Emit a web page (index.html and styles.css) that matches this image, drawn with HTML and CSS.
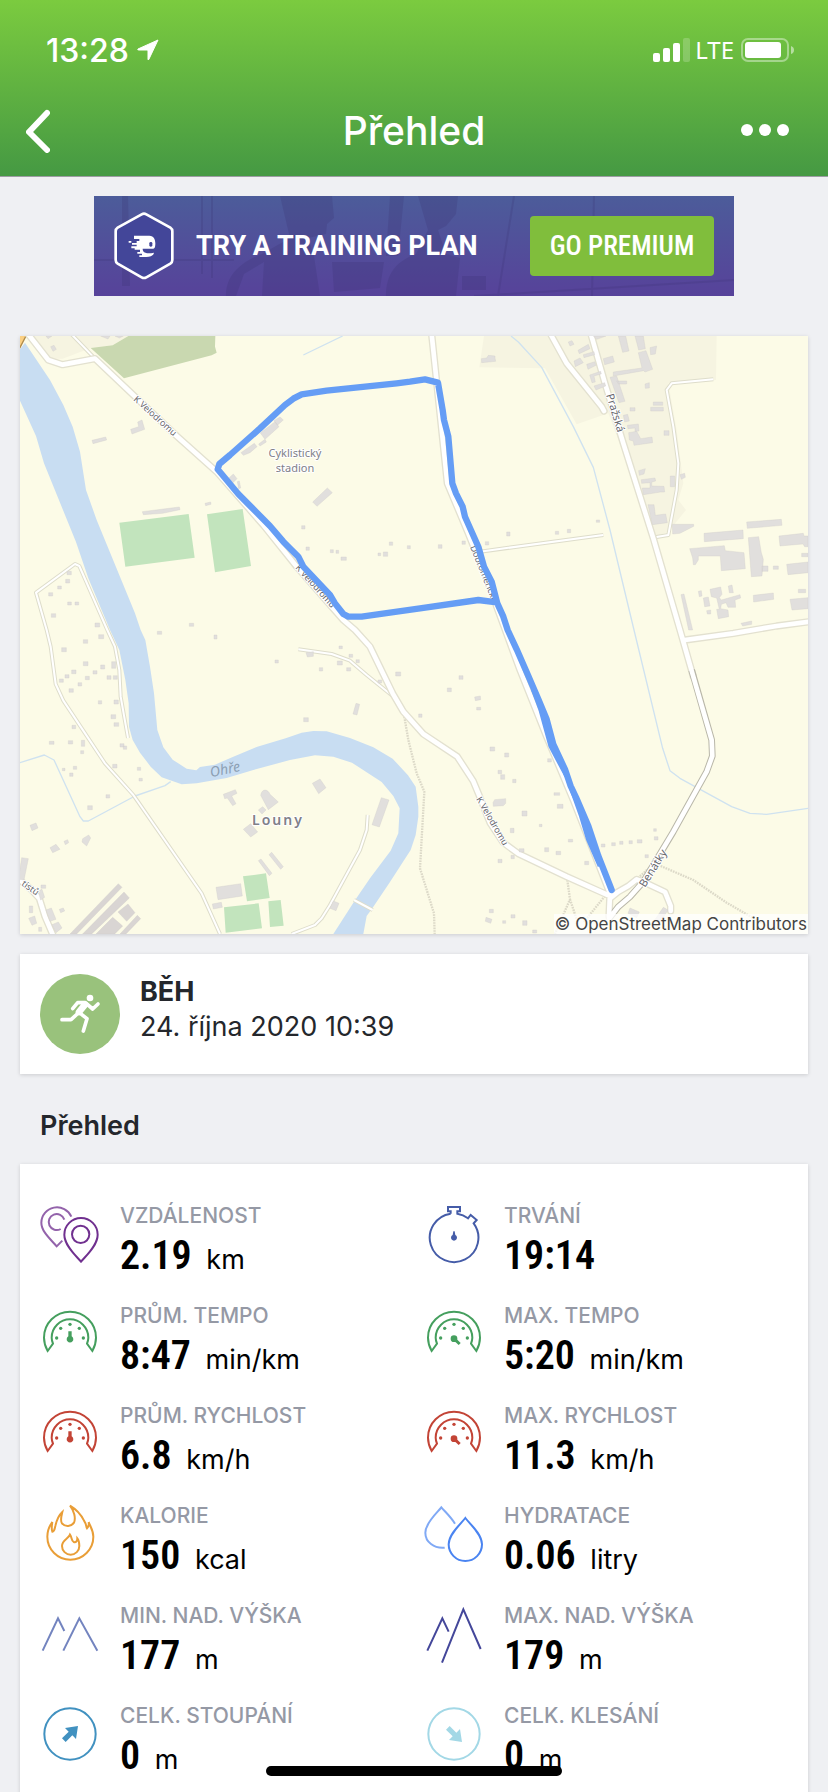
FILE: index.html
```html
<!DOCTYPE html>
<html lang="cs">
<head>
    <meta charset="UTF-8">
    <meta name="viewport" content="width=device-width, initial-scale=1.0">
    <title>Přehled</title>
    <link rel="stylesheet" href="styles.css">
</head>
<body>
    <!-- shared icons -->
    <svg class="sprite" aria-hidden="true">
        <symbol id="gauge" viewBox="0 0 180 180">
            <path d="M23 141C16 128 12 116 12 101A78 78 0 0 1 168 101C168 116 164 128 157 141L141 119C144 111 145 106 145 101A55 55 0 0 0 35 101C35 106 36 111 39 119Z"/>
            <g class="solid"><circle cx="50" cy="102" r="5"/><circle cx="130" cy="102" r="5"/><circle cx="62" cy="73" r="5"/><circle cx="118" cy="73" r="5"/><circle cx="90" cy="61" r="5"/></g>
        </symbol>
        <symbol id="arrow" viewBox="0 0 180 180">
            <circle cx="90" cy="90" r="77"/>
            <path class="solid" d="M114 66L75 72L86 83L66 103L77 114L97 94L108 105Z"/>
        </symbol>
    </svg>

    <div class="screen">
        <header class="header">
            <div class="status">
                <span class="time">13:28</span>
                <svg class="location" viewBox="0 0 22 22"><path d="M21 1L1 10Q0 11 2 11H10Q11 11 11 12V20Q11 22 12 20Z" fill="#fff" stroke="#fff" stroke-linejoin="round"/></svg>
                <svg class="signal" viewBox="0 0 37 24" fill="#fff"><rect y="15" width="7" height="9" rx="2"/><rect x="10" y="10" width="7" height="14" rx="2"/><rect x="20" y="5" width="7" height="19" rx="2"/><rect x="30" width="7" height="24" rx="2" opacity=".2"/></svg>
                <span class="network">LTE</span>
                <svg class="battery" viewBox="0 0 53 24"><rect x="1" y="1" width="46" height="22" rx="6" fill="none" stroke="#fff" stroke-width="2" opacity=".4"/><rect x="4" y="4" width="36" height="16" rx="3" fill="#fff"/><path d="M50 8Q53 9 53 12Q53 15 50 16Z" fill="#fff" opacity=".5"/></svg>
            </div>
            <nav class="navbar">
                <button class="nav-btn" aria-label="Zpět"><svg width="24" height="46" viewBox="0 0 24 46"><path d="M21 6L3 25L21 43" fill="none" stroke="#fff" stroke-width="6" stroke-linecap="round" stroke-linejoin="round"/></svg></button>
                <h1>Přehled</h1>
                <button class="nav-btn more" aria-label="Více"><svg width="48" height="12" viewBox="0 0 48 12" fill="#fff"><circle cx="6" cy="6" r="6"/><circle cx="24" cy="6" r="6"/><circle cx="42" cy="6" r="6"/></svg></button>
            </nav>
        </header>

        <main class="content">
            <section class="banner">
                <svg class="banner-bg" viewBox="0 0 640 100" preserveAspectRatio="xMidYMid slice" aria-hidden="true">
                    <g fill="#39306f" opacity=".22">
                        <path d="M186 0H238L240 22L233 28L232 38L214 42L220 60L226 100H168L170 66L150 78L142 100H132C132 82 142 68 168 58L196 42Z"/>
                        <path d="M324 0H364L362 18L352 30L344 34L352 58L366 62L362 100H292C292 80 300 66 322 58L334 34Z"/>
                        <path d="M238 66H290L286 92L240 96ZM368 80H392V94H368ZM28 0H34L36 90H28ZM296 0H310L304 60H292Z"/>
                    </g>
                    <path d="M0 64H140M108 0V78M118 0V82M420 0L404 100M500 0L498 100M380 100L640 84" stroke="#39306f" stroke-width="2" opacity=".2"/>
                </svg>
                <svg class="hexagon" viewBox="0 0 180 204" aria-hidden="true">
                    <path d="M83 7Q90 3 97 7L169 47Q175 51 175 58V144Q175 151 169 155L97 196Q90 200 83 196L11 155Q5 151 5 144V58Q5 51 11 47Z" fill="#434699" stroke="#fff" stroke-width="8"/>
                    <path d="M60 71H106C120 71 124 84 124 94C124 106 122 110 118 110H86C86 122 96 126 120 122C118 132 108 136 92 135H76V130H84V125H70V120H78V113H62V109H52V103H68V98H54V93H68V87H76V81H60ZM44 87H52V92H44Z" fill="#fff"/>
                    <rect x="106" y="90" width="9" height="14" rx="4" fill="#434699"/>
                </svg>
                <strong>TRY A TRAINING PLAN</strong>
                <button class="premium">GO PREMIUM</button>
            </section>

            <figure class="map card">
                <svg viewBox="0 0 788 598" role="img" aria-label="Mapa trasy">
                    <rect width="788" height="598" fill="#fcfbe7"/>
                    <g transform="scale(.33333)" fill="none" stroke-linejoin="round">
                        <!-- land -->
                        <path fill="#f6f4e1" d="M30 0H325L278 28L212 36L128 68H85ZM1392 0L1378 94L1575 97L1670 265L1765 232L1905 602L1945 587L1998 522L1975 492L1990 442L1970 282L1945 142L2088 132L2090 0Z"/>
                        <path fill="#c9d8b0" d="M212 36L278 28L325 0H586L585 32L590 50L575 58L312 127Z"/>
                        <path fill="#fbd083" stroke="#b08a4a" stroke-width="4" d="M-4 -4H20L-4 42Z"/>
                        <!-- river -->
                        <path fill="#c8ddf2" d="M0 40L15 20L90 132L130 207L158 272L180 347L198 462L230 552L300 722L345 832L362 882L376 912L390 992L402 1072L412 1182L430 1234L458 1271L500 1298L529 1303L540 1293L585 1286L640 1262L712 1232L797 1207L845 1190L880 1185L920 1186L990 1206L1060 1234L1118 1268L1164 1318L1187 1352L1195 1412V1442L1187 1497L1172 1542L1110 1638L1056 1718L1040 1740L1030 1794H940L1004 1694L1050 1627L1112 1544L1135 1492L1139 1417L1120 1380L1085 1338L996 1280L940 1262L885 1258L810 1272L700 1302L620 1326L530 1342L485 1345L425 1324L392 1292L360 1250L338 1212L327 1172L326 1102L316 1032L298 942L270 882L205 727L168 618L72 382L48 300L0 194Z"/>
                        <path stroke="#cfe2f0" stroke-width="4" d="M0 1280L73 1257L102 1272L180 1442L190 1455H205L345 1380L435 1349L452 1337M1473 0L1495 18L1565 94L1660 272L1720 394L1770 582L1842 882L1928 1237L1950 1304L1980 1327L2135 1412L2190 1432L2240 1435L2364 1417M850 57L968 0"/>
                        <!-- pitches -->
                        <path fill="#c2e4bd" d="M298 560L506 534L524 665L316 692ZM561 535L668 519L693 690L585 709ZM669 1621L738 1612L749 1686L681 1696ZM745 1696L782 1692L791 1769L750 1773ZM612 1714L716 1702L726 1777L617 1790Z"/>
                        <!-- paths -->
                        <path stroke="#dcd9c8" stroke-width="7" stroke-dasharray="5 3" d="M1153 1142L1165 1212L1190 1312L1213 1367L1200 1597L1242 1732L1244 1794M1642 1632L1650 1690L1605 1794M1650 1690L1670 1750M1755 1680L1690 1760M1922 1590L2020 1632L2120 1700L2240 1770M1905 1580L1850 1630"/>
                        <!-- minor roads -->
                        <path stroke="#deddcb" stroke-width="12" d="M80 882L48 770L165 684L178 690L262 882L285 932L298 1002L302 1082L324 1206M80 882L92 932L107 1044L130 1094L255 1282L340 1377L545 1672L600 1794M835 940L935 954L990 974L1040 1017L1118 1080M1043 1437L1040 1482L1020 1542L930 1707L905 1747L885 1767L815 1794M1905 604L1945 597L1970 462L1975 382L1960 272L1940 162L1955 142L2080 130M1380 647L1750 597M150 -10L225 68M1002 1692L1058 1722"/>
                        <path stroke="#fff" stroke-width="6" d="M80 882L48 770L165 684L178 690L262 882L285 932L298 1002L302 1082L324 1206M80 882L92 932L107 1044L130 1094L255 1282L340 1377L545 1672L600 1794M835 940L935 954L990 974L1040 1017L1118 1080M1043 1437L1040 1482L1020 1542L930 1707L905 1747L885 1767L815 1794M1905 604L1945 597L1970 462L1975 382L1960 272L1940 162L1955 142L2080 130M1380 647L1750 597M150 -10L225 68M1002 1692L1058 1722"/>
                        <!-- main roads -->
                        <path stroke="#e3e1d0" stroke-width="22" stroke-linecap="round" d="M25 -5L85 72L128 86L225 68L345 182L470 300L590 407L730 567L830 692L970 852L1005 882L1050 932L1118 1072L1150 1127L1210 1194L1312 1262L1360 1336L1380 1384L1410 1460L1450 1520L1495 1553L1640 1622L1770 1680M1713 -5L1755 142L1810 322L1900 607L1980 882L2020 1022M1592 -5L1640 82L1745 212L1752 225M1235 -5L1282 442L1345 592L1400 730L1500 1002L1580 1202L1660 1392L1770 1672L1767 1742M1770 1687L1795 1667L1825 1650L1850 1630L1875 1640L1935 1668L1952 1710V1725M1995 912L2140 892L2270 870L2370 857M0 1632L30 1657L58 1687L75 1742L100 1800"/>
                        <path stroke="#b9b7a9" stroke-width="20" d="M2015 1002L2075 1212L2077 1260L2060 1307L1960 1487L1870 1637L1830 1682L1795 1712L1768 1747"/>
                        <path stroke="#fff" stroke-width="14" stroke-linecap="round" d="M25 -5L85 72L128 86L225 68L345 182L470 300L590 407L730 567L830 692L970 852L1005 882L1050 932L1118 1072L1150 1127L1210 1194L1312 1262L1360 1336L1380 1384L1410 1460L1450 1520L1495 1553L1640 1622L1770 1680M1713 -5L1755 142L1810 322L1900 607L1980 882L2020 1022L2075 1212L2077 1260L2060 1307L1960 1487L1870 1637L1830 1682L1795 1712L1768 1747M1592 -5L1640 82L1745 212L1752 225M1235 -5L1282 442L1345 592L1400 730L1500 1002L1580 1202L1660 1392L1770 1672L1767 1742M1770 1687L1795 1667L1825 1650L1850 1630L1875 1640L1935 1668L1952 1710V1725M1995 912L2140 892L2270 870L2370 857M0 1632L30 1657L58 1687L75 1742L100 1800"/>
                        <!-- buildings -->
                        <g fill="#e1dfdd" stroke="#cfccc9" stroke-width="1">
                            <path d="M78 0H96L84 8ZM92 32L102 28L109 40L99 46ZM242 0H270L264 9ZM285 0H310L298 6ZM216 313L257 303L260 312L219 323ZM332 280L356 272L353 258L366 252L374 280L336 294ZM367 527L478 513L480 521L428 532L370 536ZM555 502L572 498L573 505L557 509ZM721 291L765 257L777 272L735 310ZM762 254L780 243L790 252L772 268ZM663 350L703 322L711 332L690 350L670 358ZM716 324L735 310L739 318L720 330ZM627 426L640 414L651 428L638 441ZM652 437L658 435L662 456L656 458ZM878 498L922 456L937 470L891 511Z"/>
                            <path d="M845 569h10v10h-10zM858 633h10v10h-10zM931 641h9v9h-9zM948 643h8v9h-8zM963 663h16v10h-16zM1074 651h8v8h-8zM1090 648h13v13h-13zM1108 618h10v10h-10zM1162 629h9v9h-9zM1255 626h11v11h-11zM1326 615h10v10h-10zM1396 617h10v10h-10zM1460 588h10v12h-10zM1606 586h10v9h-10zM1642 580h10v10h-10zM1729 552h10v7h-10zM508 862h13v9h-13zM86 770h12v10h-12zM113 750h11v9h-11zM137 730h12v11h-12zM141 706h13v10h-13zM143 798h11v9h-11zM165 798h11v9h-11zM94 833h13v11h-13zM225 861h14v12h-14z"/>
                            <path d="M1384 68L1400 66L1405 58L1425 60V66L1427 76L1385 80ZM1674 43L1705 25L1710 38L1678 53ZM1662 75L1680 66L1690 80L1666 92ZM1690 56L1722 47L1724 56L1692 65ZM1700 85L1724 77L1728 88L1704 100ZM1709 117L1742 106L1744 114L1722 120L1726 138L1716 140ZM1722 150L1754 140L1757 150L1728 162ZM1750 68L1778 60L1783 78L1754 86ZM1795 0H1817L1827 45L1808 49ZM1845 0H1870L1876 38L1856 42ZM1855 50L1878 44L1898 100L1875 108L1871 104L1780 120V108L1866 96ZM1770 124L1790 120L1815 196L1797 200ZM1790 135H1820V144H1795ZM1720 0H1758L1730 10ZM1645 18L1656 14L1662 25L1650 30ZM1890 35L1910 30L1906 54L1892 56ZM1875 144L1888 140V156L1876 157ZM1892 214H1930V225H1892ZM1900 198H1928V208H1900ZM1830 215H1845V225H1830ZM1810 238L1823 235L1828 255L1814 258ZM1822 268L1855 264L1857 285L1845 286V276L1824 278ZM1826 290L1850 286L1862 308L1896 303L1898 320L1842 328L1840 315L1828 312ZM1932 284H1947V298H1932ZM1856 404L1876 398L1872 414L1858 418ZM1864 431L1905 426L1907 435L1895 438V450L1932 451L1934 468H1922L1897 472L1870 476L1867 456H1890V440L1865 442ZM1951 420H1964V452H1951ZM1980 416L1994 412L1996 424L1984 430ZM1884 506H1902L1906 538L1937 534L1942 560L1897 566Z"/>
                            <path d="M1957 565H2021V571L1980 592L1958 594ZM2180 558L2284 550L2286 568L2182 577ZM2052 592L2169 582L2170 608L2053 617ZM2009 638L2113 629L2116 644L2172 650L2176 698L2104 704L2101 660H2035V672L2026 686H2020L2018 666ZM2185 605L2216 602L2224 650L2230 670L2226 720L2194 722ZM2226 690H2244V706H2226ZM2277 600L2350 592L2352 600H2364V632H2354L2349 624L2280 630ZM2300 685L2364 678V710L2304 716ZM2345 652H2364V662H2345ZM2260 690H2275V700H2260ZM2335 760H2357V770H2335ZM2310 790L2364 785V818L2316 822ZM2200 778L2260 771L2261 790L2201 798ZM2070 760L2102 753L2106 775L2098 785L2104 792L2160 776L2162 786L2145 792L2147 814L2124 814L2118 800L2104 805L2102 818L2124 822L2126 842L2095 848L2090 820H2098L2090 786L2074 782ZM2050 786L2065 783L2070 810L2054 812ZM2125 750L2136 747L2140 770L2128 770ZM2035 766L2044 764L2046 780L2038 782ZM2060 824L2072 822V834H2062ZM1983 776L1992 774L2018 882H2006ZM2163 862L2195 855V865L2168 870Z"/>
                            <path d="M125 935h14v12h-14zM190 911h13v11h-13zM236 896h15v12h-15zM190 977h14v12h-14zM242 987h12v12h-12zM275 977h12v20h-12zM219 1004h12v10h-12zM155 1002h13v11h-13zM135 1016h12v10h-12zM118 1029h12v10h-12zM174 1040h11v10h-11zM196 1021h12v10h-12zM147 1058h13v11h-13zM261 1019h12v11h-12zM280 1019h12v11h-12zM235 1094h10v10h-10zM282 1092h13v12h-13zM273 1136h14v12h-14zM282 1160h14v11h-14zM156 1168h11v10h-11zM88 1216h14v9h-14zM145 1214h13v10h-13zM184 1213h10v18h-10zM182 1244h9v9h-9zM300 1223h12v10h-12zM310 1230h10v10h-10zM278 1285h13v11h-13zM352 1294h10v9h-10zM357 1327h10v8h-10zM160 1291h10v9h-10zM127 1297h8v7h-8zM149 1311h10v10h-10zM258 1376h11v10h-11zM203 1409h14v12h-14zM412 886h13v9h-13zM582 897h9v12h-9zM765 972h10v9h-10zM898 995h10v10h-10zM851 1145h14v12h-14zM858 950L880 947V961L862 963ZM957 930h10v8h-10zM987 955h11v9h-11zM952 975h15v12h-15zM1008 971h10v9h-10zM980 995h12v10h-12zM1074 1032h11v9h-11zM1127 1008h15v12h-15zM1008 1102L1019 1105L1011 1137L999 1134Z"/>
                            <path d="M610 1375L646 1361L651 1372L635 1380L648 1403L638 1409L622 1386L614 1388ZM722 1378C726 1355 745 1360 750 1375L775 1398L745 1421ZM715 1422L728 1412L738 1422L726 1434ZM670 1480L692 1463L713 1488L692 1503ZM877 1342L900 1329L918 1355L896 1373ZM1084 1385L1107 1392L1078 1473L1056 1466ZM715 1574L723 1569L756 1612L748 1619ZM747 1556L755 1549L790 1592L782 1600ZM588 1654L662 1643L667 1680L594 1691ZM577 1704L604 1699L607 1714L580 1719ZM940 1695L957 1702L948 1724L930 1717ZM30 1468L48 1461L54 1476L36 1484ZM90 1535L108 1525L120 1540L98 1550ZM132 1516L143 1511L146 1520L136 1526ZM188 1508L206 1497L212 1506L200 1530L186 1518ZM5 1565L25 1568L12 1632L-5 1630ZM54 1665L66 1660L74 1684L62 1692ZM63 1647h14v10h-14zM78 1722L94 1716L108 1750L90 1756ZM96 1766L115 1758L126 1776L108 1790ZM26 1747L44 1740L50 1762L36 1768ZM118 1720L130 1716L134 1725L122 1730ZM28 1710h10v20h-10zM56 1774h9v12h-9z"/>
                            <path fill="#d9d5d3" d="M150 1794L295 1643L306 1654L170 1794ZM188 1794L312 1668L328 1686L215 1794ZM242 1780L278 1744L308 1770L284 1794H228ZM294 1728L324 1704L345 1730L320 1756ZM300 1794L352 1738L362 1748L318 1794Z"/>
                            <path d="M1196 1134h10v10h-10zM1282 1056h12v11h-12zM1317 1019h12v11h-12zM1364 1083L1381 1080L1382 1091L1366 1094ZM1370 1114h12v8h-12zM1410 1233h14v12h-14zM1454 1251h12v12h-12zM1434 1303h11v10h-11zM1442 1316h12v14h-12zM1478 1330h10v10h-10zM1419 1400L1424 1391L1457 1388V1402L1450 1409L1420 1411ZM1506 1425h15v15h-15zM1558 1465h8v7h-8zM1471 1477h11v13h-11zM1498 1538h14v10h-14zM1574 1535h12v12h-12zM1608 1546h14v10h-14zM1434 1570h12v10h-12zM1473 1558h10v10h-10zM1583 1268h11v10h-11zM1602 1370h17v8h-17zM1612 1405h17v12h-17zM1645 1510h13v8h-13zM1694 1576h12v10h-12zM1744 1524h11v9h-11zM1775 1520h11v9h-11zM1799 1516h10v9h-10zM1827 1514h10v9h-10zM1852 1511h14v10h-14zM1901 1478h8v8h-8zM1903 1502h11v10h-11zM1875 1556h10v9h-10zM1408 1720h12v10h-12zM1398 1744L1416 1750L1412 1762L1396 1756ZM1448 1754h9v8h-9zM1473 1736h12v10h-12zM1508 1754h13v14h-13zM1538 1782h12v9h-12zM1830 1716L1858 1728L1850 1745L1824 1732ZM1930 1714L1944 1722L1920 1760L1904 1752Z"/>
                        </g>
                    </g>
                    <g class="street">
                        <text transform="translate(113 64) rotate(42)">K Velodromu</text>
                        <text transform="translate(275 232) rotate(48)">K Velodromu</text>
                        <text transform="translate(456 463) rotate(60)">K Velodromu</text>
                        <text transform="translate(450 211) rotate(68)">Dobroměřická</text>
                        <text transform="translate(1 549) rotate(35)">tistů</text>
                        <text class="wide" transform="translate(586 59) rotate(73)">Pražská</text>
                        <text class="wide" transform="translate(625 552) rotate(-58)">Benátky</text>
                    </g>
                    <g class="place" text-anchor="middle">
                        <text x="275" y="121">Cyklistický</text>
                        <text x="275" y="136">stadion</text>
                        <text class="town" x="258" y="489">Louny</text>
                    </g>
                    <text class="water" text-anchor="middle" transform="translate(206 438) rotate(-12)">Ohře</text>
                    <!-- recorded track -->
                    <g transform="scale(.33333)" fill="none" stroke="#659df5" stroke-width="19" stroke-linejoin="round">
                        <path stroke-linecap="round" d="M1775 1662L1735 1560L1705 1470L1668 1384L1652 1350L1635 1300L1600 1225L1580 1150L1555 1090L1525 1020L1490 940L1463 882L1450 842L1432 802L1415 737L1392 692L1375 632L1335 542L1328 512L1308 472L1297 442L1285 302L1272 252L1268 222L1254 140L1215 130L1170 137L1130 142L920 164L845 175L820 188L795 207L720 277L630 357L598 384L593 400L655 474L750 570L790 617L835 662L850 692L930 777L945 802L970 834L985 842H1025L1200 817L1375 792L1430 799"/>
                        <path stroke-width="14" d="M1540 1060L1562 1120L1592 1230L1640 1320M1652 1350L1684 1440L1705 1510L1740 1590"/>
                    </g>
                </svg>
                <figcaption>© OpenStreetMap Contributors</figcaption>
            </figure>

            <section class="activity card">
                <svg class="sport" viewBox="0 0 240 240" aria-hidden="true">
                    <circle cx="120" cy="120" r="120" fill="#99c27c"/>
                    <circle cx="150" cy="72" r="10" fill="#fff"/>
                    <g fill="none" stroke="#fff" stroke-width="11" stroke-linecap="round" stroke-linejoin="round">
                        <path d="M98 104L113 86H136L158 105L174 90"/>
                        <path d="M118 116L141 134L130 171"/>
                        <path d="M66 137H93L118 114"/>
                        <path d="M135 92L117 114" stroke-width="20"/>
                    </g>
                </svg>
                <div>
                    <h2>BĚH</h2>
                    <time datetime="2020-10-24T10:39">24. října 2020 10:39</time>
                </div>
            </section>

            <h2 class="section-title">Přehled</h2>

            <dl class="stats card">
                <div class="stat">
                    <svg class="icon purple" viewBox="0 0 180 180">
                        <g opacity=".75"><path d="M94 38A47 47 0 0 0 4 56C4 82 30 104 50 127L67 110"/><path d="M73 47A24 24 0 1 0 62 75"/></g>
                        <path d="M123 173C110 157 73 125 73 92A50 50 0 0 1 173 92C173 125 136 157 123 173Z"/><circle cx="122" cy="91" r="26"/>
                    </svg>
                    <div><dt>VZDÁLENOST</dt><dd><b>2.19</b> km</dd></div>
                </div>
                <div class="stat">
                    <svg class="icon indigo" viewBox="0 0 180 180">
                        <path d="M80 29V22H72V9H108V22H100V29A72 72 0 0 1 132 43L140 33L158 48L149 58A73 73 0 1 1 80 29"/><path class="solid" d="M88 82H92L94 93A9 9 0 1 1 86 93Z"/>
                    </svg>
                    <div><dt>TRVÁNÍ</dt><dd><b>19:14</b></dd></div>
                </div>
                <div class="stat">
                    <svg class="icon green" viewBox="0 0 180 180"><use href="#gauge"/><path class="solid" d="M85 82H95V97A10 10 0 1 1 85 97Z"/></svg>
                    <div><dt>PRŮM. TEMPO</dt><dd><b>8:47</b> min/km</dd></div>
                </div>
                <div class="stat">
                    <svg class="icon green" viewBox="0 0 180 180"><use href="#gauge"/><circle class="solid" cx="90" cy="104" r="10"/><path d="M90 104L107 120" stroke-width="9"/></svg>
                    <div><dt>MAX. TEMPO</dt><dd><b>5:20</b> min/km</dd></div>
                </div>
                <div class="stat">
                    <svg class="icon red" viewBox="0 0 180 180"><use href="#gauge"/><path class="solid" d="M85 82H95V97A10 10 0 1 1 85 97Z"/></svg>
                    <div><dt>PRŮM. RYCHLOST</dt><dd><b>6.8</b> km/h</dd></div>
                </div>
                <div class="stat">
                    <svg class="icon red" viewBox="0 0 180 180"><use href="#gauge"/><circle class="solid" cx="90" cy="104" r="10"/><path d="M90 104L107 120" stroke-width="9"/></svg>
                    <div><dt>MAX. RYCHLOST</dt><dd><b>11.3</b> km/h</dd></div>
                </div>
                <div class="stat">
                    <svg class="icon orange" viewBox="0 0 180 180">
                        <path d="M90 5C112 18 126 38 132 50C140 62 138 68 141 73C146 68 147 60 146 54C152 70 160 80 160 98A69 69 0 0 1 22 98C22 80 28 66 37 54C35 66 34 76 37 83C44 82 44 74 46 66C50 48 56 34 67 24C63 40 60 50 66 58C76 70 94 68 102 56C108 42 102 20 90 5Z"/>
                        <path d="M90 92C86 104 66 108 66 126A26 26 0 0 0 118 126C118 116 116 108 112 103C112 112 108 116 101 114C94 110 96 100 90 92Z"/>
                    </svg>
                    <div><dt>KALORIE</dt><dd><b>150</b> kcal</dd></div>
                </div>
                <div class="stat">
                    <svg class="icon blue" viewBox="0 0 180 180">
                        <path opacity=".7" d="M93 59C80 38 64 24 52 10C42 24 4 56 4 86C4 114 30 134 62 131"/>
                        <path d="M124 42C112 58 74 90 74 121A50 50 0 0 0 174 121C174 90 136 58 124 42Z"/>
                    </svg>
                    <div><dt>HYDRATACE</dt><dd><b>0.06</b> litry</dd></div>
                </div>
                <div class="stat">
                    <svg class="icon slate" viewBox="0 0 180 180"><path d="M8 140L54 43L73 81M70 140L118 43L172 140"/></svg>
                    <div><dt>MIN. NAD. VÝŠKA</dt><dd><b>177</b> m</dd></div>
                </div>
                <div class="stat">
                    <svg class="icon navy" viewBox="0 0 180 180"><path d="M10 140L55 43L74 83M54 176L118 16L170 135"/></svg>
                    <div><dt>MAX. NAD. VÝŠKA</dt><dd><b>179</b> m</dd></div>
                </div>
                <div class="stat">
                    <svg class="icon azure" viewBox="0 0 180 180"><use href="#arrow"/></svg>
                    <div><dt>CELK. STOUPÁNÍ</dt><dd><b>0</b> m</dd></div>
                </div>
                <div class="stat">
                    <svg class="icon sky" viewBox="0 0 180 180"><use href="#arrow" transform="rotate(90 90 90)"/></svg>
                    <div><dt>CELK. KLESÁNÍ</dt><dd><b>0</b> m</dd></div>
                </div>
            </dl>
        </main>
        <div class="home-bar"></div>
    </div>
</body>
</html>
```
FILE: styles.css
```css
* {
    box-sizing: border-box;
}
body {
    margin: 0;
    font-family: Inter, "Liberation Sans", sans-serif;
    background-color: #eff0f3;
    color: #24272c;
}
h1, h2, dl, dd, figure {
    margin: 0;
}
button {
    border: none;
    padding: 0;
    background: none;
    color: #fff;
    cursor: pointer;
}
svg {
    display: block;
    flex-shrink: 0;
}
.sprite {
    position: absolute;
    width: 0;
    height: 0;
}
.screen {
    display: flex;
    flex-direction: column;
    height: 100vh;
}

/* header */
.header {
    flex-shrink: 0;
    z-index: 1;
    color: #fff;
    background: linear-gradient(#7bcb3f, #459943);
    box-shadow: 0 1px 0 #9c9da3;
}
.status {
    display: flex;
    align-items: center;
    height: 88px;
    padding: 12px 34px 0 46px;
}
.time {
    font-size: 32px;
    font-weight: 500;
}
.location {
    width: 22px;
    margin-left: 8px;
}
.signal {
    width: 37px;
    margin-left: auto;
}
.network {
    margin: 0 7px 0 5px;
    font-family: "Noto Sans", sans-serif;
    font-size: 24px;
    line-height: 24px;
}
.battery {
    width: 53px;
}
.navbar {
    display: flex;
    justify-content: space-between;
    align-items: center;
    height: 88px;
    padding: 0 26px 4px;
}
.navbar h1 {
    font-size: 39px;
    font-weight: 500;
}
.nav-btn {
    display: flex;
    align-items: center;
    width: 61px;
    height: 48px;
}

/* content */
.content {
    flex: 1;
    min-height: 0;
    padding: 20px;
    overflow-y: auto;
    scrollbar-width: none;
}
.card {
    background-color: #fff;
    box-shadow: 0 1px 4px rgba(0, 0, 0, 0.15);
}
.banner {
    position: relative;
    display: flex;
    align-items: center;
    max-width: 640px;
    height: 100px;
    margin: 0 auto 40px;
    padding: 0 20px;
    background: linear-gradient(#4c5c9a, #57429a);
    color: #fff;
}
.banner-bg {
    position: absolute;
    left: 0;
    top: 0;
    width: 100%;
    height: 100%;
}
.hexagon {
    position: relative;
    width: 60px;
    margin-right: 22px;
}
.banner strong {
    position: relative;
    font-family: Roboto, sans-serif;
    font-size: 27px;
    font-weight: 700;
}
.premium {
    position: relative;
    width: 184px;
    height: 60px;
    margin-left: auto;
    border-radius: 4px;
    background-color: #80be3c;
    font-family: "Roboto Condensed", Roboto, sans-serif;
    font-size: 27px;
    font-weight: 500;
}
.map {
    position: relative;
    margin-bottom: 20px;
}
.map svg {
    width: 100%;
    height: auto;
}
.map text {
    font-family: "Noto Sans", sans-serif;
    font-size: 11px;
    fill: #66666c;
    stroke: #fff;
    stroke-width: 2px;
    stroke-linejoin: round;
    paint-order: stroke;
}
.map .street text {
    font-size: 9px;
}
.map .street .wide {
    font-size: 11px;
}
.map .place text {
    fill: #808088;
}
.map .place .town {
    font-size: 14px;
    font-weight: 600;
    letter-spacing: 2px;
}
.map .water {
    font-size: 14px;
    font-style: italic;
    fill: #8c9fb3;
    stroke: none;
}
.map figcaption {
    position: absolute;
    right: 0;
    bottom: 0;
    padding: 0 1px;
    background-color: rgba(255, 255, 255, 0.75);
    color: #444;
    font-size: 17px;
    line-height: 20px;
}
.activity {
    display: flex;
    height: 120px;
    padding: 20px;
}
.sport {
    width: 80px;
    height: 80px;
    margin-right: 20px;
}
.activity h2 {
    font-size: 27px;
    font-weight: 700;
    line-height: 35px;
}
.activity time {
    font-size: 27px;
    line-height: 35px;
}
.section-title {
    padding: 32px 20px 18px;
    font-size: 27px;
    font-weight: 600;
    line-height: 40px;
}

/* stats */
.stats {
    display: grid;
    grid-template-columns: 1fr 1fr;
    column-gap: 20px;
    grid-auto-rows: 100px;
    padding: 40px 20px 20px;
}
.stat {
    display: flex;
    gap: 20px;
    white-space: nowrap;
}
.stat dt {
    color: #9599a5;
    font-size: 21px;
    font-weight: 500;
    line-height: 24px;
}
.stat dd {
    color: #000;
    font-size: 27px;
    line-height: 56px;
}
.stat b {
    margin-right: 7px;
    font-family: "Roboto Condensed", "Liberation Sans Narrow", Roboto, sans-serif;
    font-size: 40px;
    font-weight: 600;
}
.icon {
    width: 60px;
    height: 60px;
    fill: none;
    stroke: currentColor;
    stroke-width: 6;
}
.solid {
    fill: currentColor;
    stroke: none;
}
.more {
    justify-content: flex-start;
    width: 61px;
}
.purple { color: #70308f; }
.indigo { color: #455ca8; }
.green { color: #459f5e; }
.red { color: #c34436; }
.orange { color: #e99e37; }
.blue { color: #4a84f1; }
.slate { color: #7384bf; }
.navy { color: #44479a; }
.azure { color: #4191c0; }
.sky { color: #a3d8e6; }

.home-bar {
    position: fixed;
    left: 50%;
    bottom: 16px;
    width: 296px;
    height: 10px;
    margin-left: -148px;
    border-radius: 5px;
    background-color: #000;
}
```
